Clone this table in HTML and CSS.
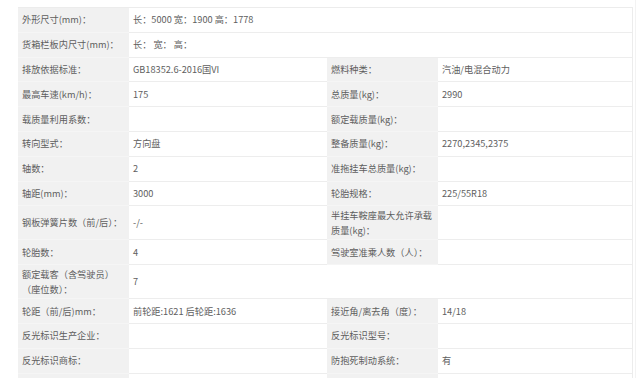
FILE: index.html
```html
<!DOCTYPE html>
<html lang="zh-CN">
<head>
<meta charset="utf-8">
<title>参数</title>
<link rel="stylesheet" href="styles.css">
</head>
<body>
<div class="page">
  <div class="spec">
    <div class="lab">外形尺寸(mm)：</div><div class="val span3">长：5000 宽：1900 高：1778</div>
    <div class="lab">货箱栏板内尺寸(mm)：</div><div class="val span3">长： 宽： 高：</div>

    <div class="lab">排放依据标准：</div><div class="val">GB18352.6-2016国VI</div>
    <div class="lab">燃料种类：</div><div class="val">汽油/电混合动力</div>

    <div class="lab">最高车速(km/h)：</div><div class="val">175</div>
    <div class="lab">总质量(kg)：</div><div class="val">2990</div>

    <div class="lab">载质量利用系数：</div><div class="val"></div>
    <div class="lab">额定载质量(kg)：</div><div class="val"></div>

    <div class="lab">转向型式：</div><div class="val">方向盘</div>
    <div class="lab">整备质量(kg)：</div><div class="val">2270,2345,2375</div>

    <div class="lab">轴数：</div><div class="val">2</div>
    <div class="lab">准拖挂车总质量(kg)：</div><div class="val"></div>

    <div class="lab">轴距(mm)：</div><div class="val">3000</div>
    <div class="lab">轮胎规格：</div><div class="val">225/55R18</div>

    <div class="lab">钢板弹簧片数（前/后）：</div><div class="val">-/-</div>
    <div class="lab">半挂车鞍座最大允许承载质量(kg)：</div><div class="val"></div>

    <div class="lab">轮胎数：</div><div class="val">4</div>
    <div class="lab">驾驶室准乘人数（人）：</div><div class="val"></div>

    <div class="lab">额定载客（含驾驶员）（座位数）：</div><div class="val">7</div>
    <div class="val"></div><div class="val"></div>

    <div class="lab">轮距（前/后)mm：</div><div class="val">前轮距:1621 后轮距:1636</div>
    <div class="lab">接近角/离去角（度）：</div><div class="val">14/18</div>

    <div class="lab">反光标识生产企业：</div><div class="val"></div>
    <div class="lab">反光标识型号：</div><div class="val"></div>

    <div class="lab">反光标识商标：</div><div class="val"></div>
    <div class="lab">防抱死制动系统：</div><div class="val">有</div>

    <div class="lab"></div><div class="val"></div>
    <div class="lab"></div><div class="val"></div>
  </div>
</div>
</body>
</html>
```

FILE: styles.css
```css
html, body {
  margin: 0;
  padding: 0;
  background: #ffffff;
}

.page {
  width: 636px;
  height: 378px;
  box-sizing: border-box;
  padding: 7px 0 0 18px;
  border-right: 1px solid #f3f3f3;
  overflow: hidden;
  font-family: "Noto Sans CJK SC", "Noto Sans", sans-serif;
  font-size: 9.2px;
  line-height: 15px;
  color: #5e5e5e;
}

.spec {
  width: 615px;
  display: grid;
  grid-template-columns: 111px 198px 111px 1fr;
  grid-auto-rows: minmax(24.8px, auto);
  border-top: 1px solid #ececec;
  border-right: 1px solid #ececec;
  box-sizing: border-box;
}

.lab, .val {
  box-sizing: border-box;
  display: flex;
  align-items: center;
  padding: 1.5px 4px 1.5px 4px;
  border-bottom: 1px solid #ededed;
  min-width: 0;
}

.lab {
  background: #f1f1f1;
  border-bottom-color: #f5f5f5;
}

.val {
  background: #ffffff;
}

.span3 {
  grid-column: span 3;
}
```
